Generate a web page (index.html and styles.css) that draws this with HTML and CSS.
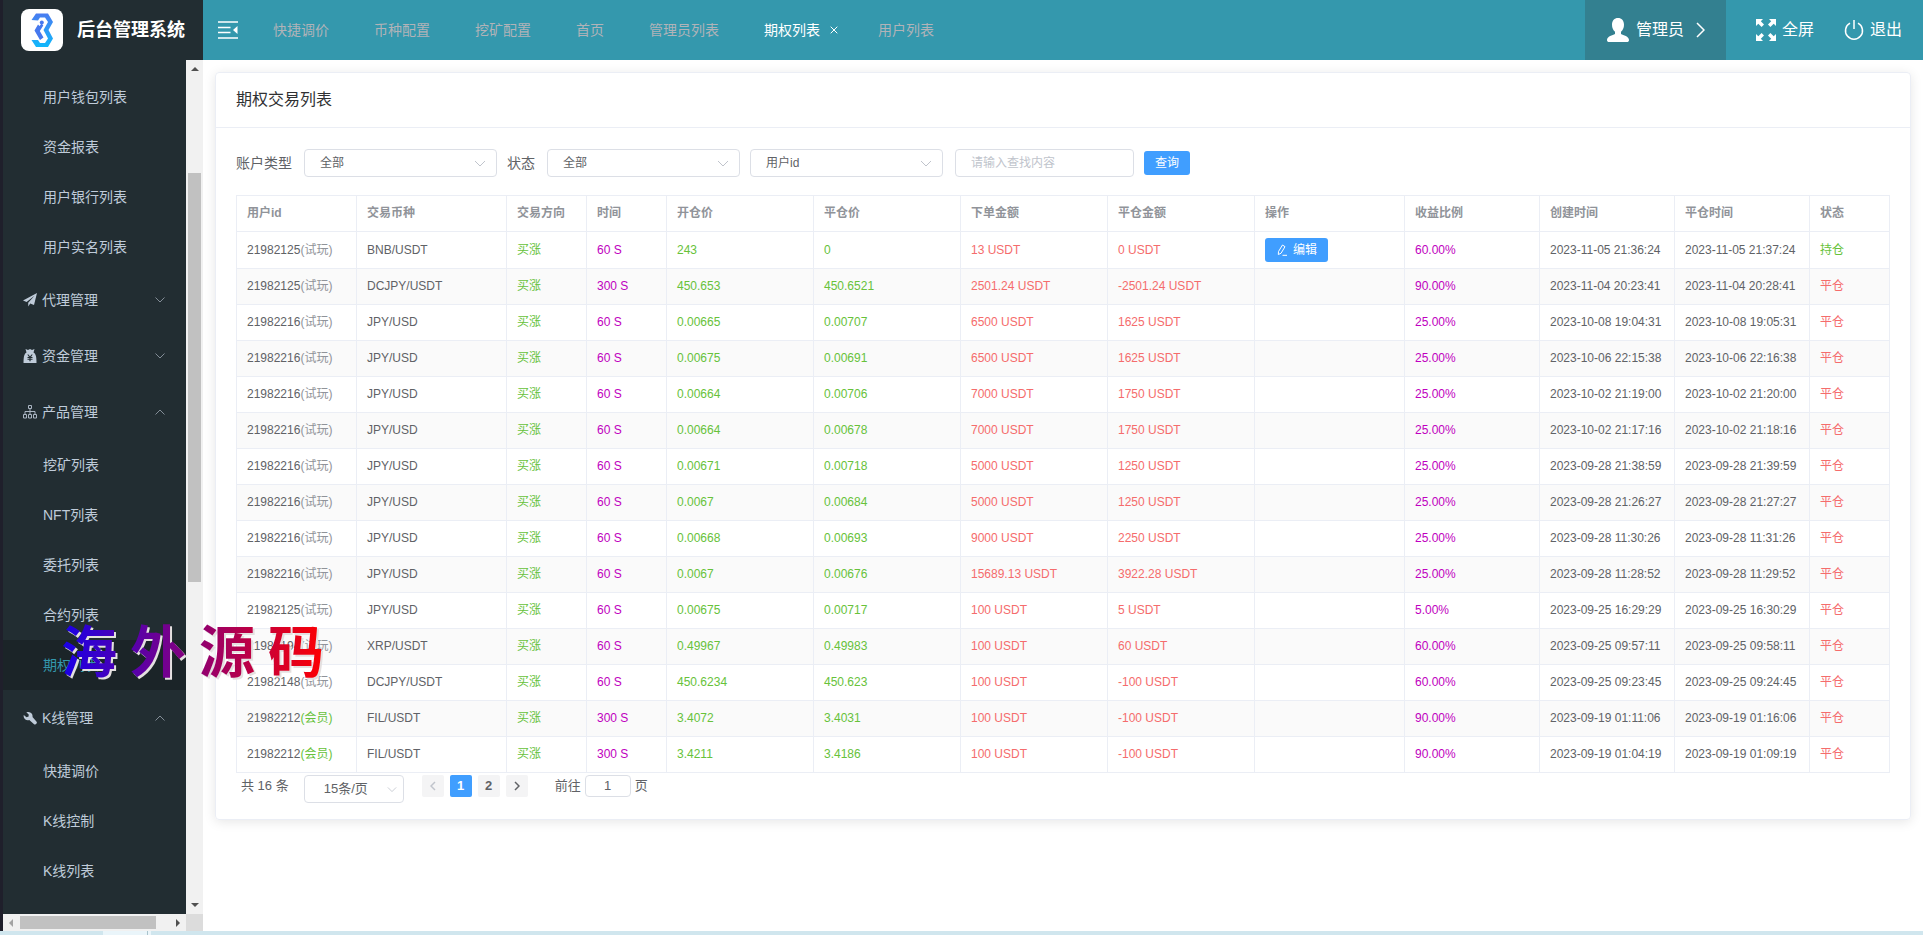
FILE: index.html
```html
<!DOCTYPE html>
<html lang="zh-CN">
<head>
<meta charset="utf-8">
<title>后台管理系统</title>
<link rel="stylesheet" href="styles.css">
</head>
<body>
<div class="shell">
  <aside class="sidebar">
    <div class="brand">
      <svg class="brand-logo" viewBox="0 0 42 42" aria-hidden="true">
        <defs><linearGradient id="lg" x1="0" y1="0" x2="0" y2="1"><stop offset="0" stop-color="#4a7cf0"/><stop offset="1" stop-color="#10b8fb"/></linearGradient></defs>
        <rect width="42" height="42" rx="8" fill="#fff"/>
        <path d="M10.500 11 L15 4.500 H27 L32 13 L27.500 21 L32 29.500 L27 38 H15 L10.500 31 H17 L19 34 H24 L27 29.500 L22.500 21 L27 13 L24 8.500 H19 L17 11.500 Z" fill="url(#lg)"/>
        <path d="M17 15.500 L13.500 21.500 L19 31 L22.500 28.500 L18.800 22 L22.300 16.500 L20.500 14.500 L18.500 17 Z" fill="#4678ee"/>
        <circle cx="20.800" cy="13.500" r="2" fill="#4678ee"/>
      </svg>
      <span class="brand-name">后台管理系统</span>
    </div>
    <div class="side-body">
      <nav class="menu">
        <a class="item" href="#">用户钱包列表</a>
        <a class="item" href="#">资金报表</a>
        <a class="item" href="#">用户银行列表</a>
        <a class="item" href="#">用户实名列表</a>
        <button class="group" type="button"><svg class="gi" viewBox="0 0 14 14"><path d="M14 0 L0 7.600 L3.600 9 L11.500 2.800 L5.200 9.700 L5.300 13.500 L7.200 10.600 L11 12 Z"/></svg><span>代理管理</span><svg class="arr" viewBox="0 0 10 6"><path d="M.5.5 5 5 9.500.5"/></svg></button>
        <button class="group" type="button"><svg class="gi" viewBox="0 0 14 14"><path fill-rule="evenodd" d="M2.500 0 L5 1 L7 0 L9 1 L11.500 0 L10.500 3.500 C12.500 4.500 13.500 7 13.500 14 H.5 C.5 7 1.500 4.500 3.500 3.500 Z M4.300 5.500 L6 8 H4.500 V9 H6.400 V9.800 H4.500 V10.800 H6.400 V12.300 H7.600 V10.800 H9.500 V9.800 H7.600 V9 H9.500 V8 H8 L9.700 5.500 H8.500 L7 7.600 L5.500 5.500 Z"/></svg><span>资金管理</span><svg class="arr" viewBox="0 0 10 6"><path d="M.5.5 5 5 9.500.5"/></svg></button>
        <button class="group" type="button"><svg class="gi line" viewBox="0 0 14 14"><path d="M5.500.5h3v3h-3z M7 3.500v3 M2 9.500v-3h10v3 M7 6.500v3 M.5 9.500h3v3.500h-3z M5.500 9.500h3v3.500h-3z M10.500 9.500h3v3.500h-3z"/></svg><span>产品管理</span><svg class="arr" viewBox="0 0 10 6"><path d="M.5 5.500 5 1 9.500 5.500"/></svg></button>
        <a class="item" href="#">挖矿列表</a>
        <a class="item" href="#">NFT列表</a>
        <a class="item" href="#">委托列表</a>
        <a class="item" href="#">合约列表</a>
        <a class="item active" href="#">期权列表</a>
        <button class="group" type="button"><svg class="gi" viewBox="0 0 14 14"><path d="M5.500 1 A4.200 4.200 0 0 1 9.500 6 L13.200 10.300 A1.700 1.700 0 0 1 10.800 13 L6.300 9 A4.200 4.200 0 0 1 .8 4 L3.500 6.200 L5.600 5.600 L5.700 3.500 L3.300 1.200 A4 4 0 0 1 5.500 1 Z"/></svg><span>K线管理</span><svg class="arr" viewBox="0 0 10 6"><path d="M.5 5.500 5 1 9.500 5.500"/></svg></button>
        <a class="item" href="#">快捷调价</a>
        <a class="item" href="#">K线控制</a>
        <a class="item" href="#">K线列表</a>
      </nav>
      <div class="vbar"><i class="tri up"></i><div class="vtrack"><div class="vthumb"></div></div><i class="tri down"></i></div>
      <div class="hbar"><i class="tri left"></i><div class="hthumb"></div><i class="tri right"></i></div>
      <div class="corner"></div>
    </div>
  </aside>

  <div class="main">
    <header class="topbar">
      <button class="fold" type="button" aria-label="收起菜单"><svg viewBox="0 0 20 18"><path d="M0 1h20M0 6.500h12.500M0 11.500h12.500M0 17h20" stroke="#fff" stroke-width="1.600" fill="none"/><path d="M19.500 5v8L15 9z" fill="#fff"/></svg></button>
      <nav class="tabs">
        <a href="#">快捷调价</a><a href="#">币种配置</a><a href="#">挖矿配置</a><a href="#">首页</a><a href="#">管理员列表</a><a href="#" class="on">期权列表<svg class="x" viewBox="0 0 8 8"><path d="M.7.700l6.600 6.600M7.300.700L.7 7.300"/></svg></a><a href="#">用户列表</a>
      </nav>
      <button class="user" type="button"><svg class="head" viewBox="0 0 24 26"><path fill="#fff" d="M12 1c3.600 0 6 2.700 6 6.700 0 2.900-1.200 5.700-3 7.100v2.100c2.300 1.200 8 2.200 8 6 0 1.400-.8 2.100-2.300 2.100H3.300C1.800 25 1 24.300 1 22.900c0-3.800 5.700-4.800 8-6v-2.100c-1.800-1.400-3-4.200-3-7.100 0-4 2.400-6.700 6-6.700z"/></svg><span>管理员</span><svg class="chev" viewBox="0 0 9 16"><path d="M1 1l7 7-7 7"/></svg></button>
      <div class="actions">
        <button type="button"><svg class="full" viewBox="0 0 20 22"><path fill="#fff" d="M0 0h7L4.800 2.200 8 5.600 5.600 8 2.300 4.700 0 7zM20 0v7l-2.300-2.300L14.400 8 12 5.600l3.200-3.400L13 0zM0 22v-7l2.300 2.300L5.600 14 8 16.400l-3.200 3.400L7 22zM20 22h-7l2.200-2.200-3.200-3.400 2.400-2.400 3.300 3.300L20 15z"/></svg>全屏</button>
        <button type="button"><svg class="power" viewBox="0 0 20 20"><path d="M6 3.200a8.500 8.500 0 1 0 8 0M10 0v9"/></svg>退出</button>
      </div>
    </header>

    <main class="content">
      <section class="card">
        <h1 class="card-head">期权交易列表</h1>
        <div class="card-body">
          <form class="filters">
            <label for="acct">账户类型</label>
            <span class="sel"><select id="acct"><option>全部</option></select><svg viewBox="0 0 12 7"><path d="M1 1l5 5 5-5"/></svg></span>
            <label for="state">状态</label>
            <span class="sel"><select id="state"><option>全部</option></select><svg viewBox="0 0 12 7"><path d="M1 1l5 5 5-5"/></svg></span>
            <span class="sel"><select aria-label="查找字段"><option>用户id</option></select><svg viewBox="0 0 12 7"><path d="M1 1l5 5 5-5"/></svg></span>
            <input class="search" type="text" placeholder="请输入查找内容" aria-label="查找内容">
            <button class="btn" type="button">查询</button>
          </form>
          <table>
            <colgroup><col class="w120"><col class="w150"><col class="w80"><col class="w80"><col><col><col><col><col class="w150"><col class="w135"><col class="w135"><col class="w135"><col class="w80"></colgroup>
            <thead><tr><th>用户id</th><th>交易币种</th><th>交易方向</th><th>时间</th><th>开仓价</th><th>平仓价</th><th>下单金额</th><th>平仓金额</th><th>操作</th><th>收益比例</th><th>创建时间</th><th>平仓时间</th><th>状态</th></tr></thead>
            <tbody id="rows"></tbody>
          </table>
          <div class="pager">
            <span class="total">共 16 条</span>
            <span class="sel size"><select aria-label="每页条数"><option>15条/页</option></select><svg viewBox="0 0 12 7"><path d="M1 1l5 5 5-5"/></svg></span>
            <div class="pages">
              <button type="button" disabled aria-label="上一页"><svg viewBox="0 0 6 10"><path d="M5 1L1 5l4 4"/></svg></button>
              <button type="button" class="cur">1</button>
              <button type="button">2</button>
              <button type="button" aria-label="下一页"><svg viewBox="0 0 6 10"><path d="M1 1l4 4-4 4"/></svg></button>
            </div>
            <label class="jump">前往<input type="text" value="1">页</label>
          </div>
        </div>
      </section>
    </main>
  </div>
  <div class="watermark"><span>海</span><span>外</span><span>源</span><span>码</span></div>
</div>
<div class="status"></div>
<script src="rows.js"></script>
</body>
</html>
```
FILE: styles.css
```css
* { box-sizing: border-box; }
body {
  margin: 0;
  height: 100vh;
  display: flex;
  flex-direction: column;
  overflow: hidden;
  background: #fff;
  color: #606266;
  font: 14px/20px "Liberation Sans", "Noto Sans CJK SC", sans-serif;
}
button, input, select { font: inherit; color: inherit; }
button { border: 0; padding: 0; background: none; cursor: pointer; }
a { text-decoration: none; color: inherit; }
svg { flex: none; fill: none; }

.shell { position: relative; flex: 1; min-height: 0; display: flex; }
.status { height: 4px; background: linear-gradient(90deg, #d0e6ee 103px, #eaf5fa 103px 147px, #a9c3cc 147px 148px, #eaf5fa 148px 151px, #d0e6ee 151px); }

.sidebar {
  width: 203px;
  flex: none;
  display: flex;
  flex-direction: column;
  border-left: 3px solid #1f1f2b;
  background: #222d32;
  color: #bfcbd9;
}
.brand { height: 60px; flex: none; display: flex; align-items: center; gap: 14px; padding-left: 18px; }
.brand-logo { width: 42px; height: 42px; }
.brand-name { color: #fff; font-size: 18px; font-weight: bold; white-space: nowrap; }
.side-body { flex: 1; min-height: 0; display: grid; grid-template: minmax(0, 1fr) 17px / minmax(0, 1fr) 17px; }
.menu { padding-top: 12px; overflow: hidden; display: flex; flex-direction: column; }
.item { height: 50px; flex: none; line-height: 50px; padding-left: 40px; }
.item.active { background: #1b2428; color: #3498ad; }
.group { height: 56px; flex: none; display: flex; align-items: center; gap: 5px; padding: 0 21px 0 20px; text-align: left; }
.group span { flex: 1; }
.gi { width: 14px; height: 14px; fill: #bfcbd9; }
.gi.line { fill: none; stroke: #aab5c2; }
.arr { width: 10px; height: 6px; stroke: #838d97; }
.vbar { background: #f1f1f1; display: flex; flex-direction: column; align-items: center; justify-content: space-between; padding: 7px 2px; }
.vtrack { flex: 1; align-self: stretch; padding: 102px 0 0; }
.vthumb { height: 56%; min-height: 20px; background: #c1c1c1; }
.hbar { background: #f1f1f1; display: flex; align-items: center; justify-content: space-between; padding: 2px 6px; }
.hthumb { flex: 1; height: 13px; margin: 0 20px 0 7px; background: #c1c1c1; }
.corner { background: #dcdcdc; }
.tri { border: 4px solid transparent; }
.tri.up { border-top: 0; border-bottom-color: #505050; }
.tri.down { border-bottom: 0; border-top-color: #505050; }
.tri.left { border-left: 0; border-right-color: #a3a3a3; }
.tri.right { border-right: 0; border-left-color: #505050; }

.main { flex: 1; min-width: 0; }
.topbar { height: 60px; display: flex; align-items: stretch; background: #3498ad; color: #fff; }
.fold { width: 50px; display: flex; align-items: center; justify-content: center; }
.fold svg { width: 20px; height: 18px; }
.tabs { flex: 1; display: flex; align-items: center; gap: 45px; padding-left: 20px; color: #b1b3b8; }
.tabs .on { color: #fff; display: flex; align-items: center; gap: 10px; margin-right: -5px; }
.x { width: 8px; height: 8px; stroke: #fff; }
.user { display: flex; align-items: center; background: #338090; padding: 0 21px; font-size: 16px; }
.head { width: 24px; height: 26px; margin-right: 6px; }
.chev { width: 9px; height: 16px; stroke: #fff; stroke-width: 1.500; margin-left: 12px; }
.actions { display: flex; gap: 30px; padding: 0 21px 0 30px; font-size: 16px; }
.actions button { display: flex; align-items: center; gap: 6px; }
.full { width: 20px; height: 22px; }
.power { width: 20px; height: 20px; stroke: #fff; stroke-width: 1.500; }

.content { padding: 12px; }
.card { border: 1px solid #ebeef5; border-radius: 4px; box-shadow: 0 2px 12px rgba(0, 0, 0, .1); }
.card-head { margin: 0; padding: 17px 20px; font-size: 16px; font-weight: normal; line-height: 20px; color: #303133; border-bottom: 1px solid #ebeef5; }
.card-body { padding: 20px 20px 16px; }

.filters { display: flex; align-items: center; height: 28px; margin: 1px 0 18px; }
.sel { position: relative; width: 193px; height: 28px; display: block; margin: 0 10px 0 12px; }
.sel + .sel { margin: 0 12px 0 0; }
.sel select, .search {
  width: 100%;
  height: 28px;
  appearance: none;
  background: #fff;
  border: 1px solid #dcdfe6;
  border-radius: 4px;
  padding: 0 15px;
  font-size: 12px;
  outline: 0;
}
.sel svg { position: absolute; right: 11px; top: 11px; width: 12px; height: 7px; stroke: #c0c4cc; pointer-events: none; }
.search { width: 179px; }
.search::placeholder { color: #c0c4cc; }
.btn { height: 24px; padding: 0 11px; border-radius: 3px; background: #409eff; color: #fff; font-size: 12px; line-height: 24px; }
.filters .btn { margin-left: 10px; }
td .btn { display: flex; align-items: center; gap: 5px; }
.btn svg { width: 12px; height: 12px; stroke: #fff; }

table { width: 100%; table-layout: fixed; border-collapse: collapse; font-size: 12px; line-height: 23px; }
th, td { height: 36px; padding: 0 10px; border: 1px solid #ebeef5; text-align: left; white-space: nowrap; }
th { color: #909399; font-weight: bold; }
tbody tr:first-child td { height: 37px; }
tbody tr:nth-child(even) { background: #fafafa; }
.w80 { width: 80px; }
.w120 { width: 120px; }
.w135 { width: 135px; }
.w150 { width: 150px; }
.green { color: #67c23a; }
.red { color: #f56c6c; }
.purple { color: #c000c0; }
.grey { color: #909399; }

.pager { display: flex; align-items: flex-start; padding: 2px 5px 0; font-size: 13px; }
.total { line-height: 22px; }
.sel.size { width: 100px; margin: 0 18px 0 15px; }
.size select { font-size: 13px; padding-left: 19px; }
.size svg { right: 7px; width: 10px; }
.pages { display: flex; gap: 6px; }
.pages button { width: 22px; height: 22px; border-radius: 2px; background: #f4f4f5; font-weight: bold; display: flex; align-items: center; justify-content: center; }
.pages svg { width: 6px; height: 10px; stroke: #606266; stroke-width: 1.500; }
.pages button:disabled svg { stroke: #c0c4cc; }
.pages .cur { background: #409eff; color: #fff; }
.jump { display: flex; gap: 4px; margin-left: 27px; line-height: 22px; }
.jump input { width: 46px; height: 22px; border: 1px solid #dcdfe6; border-radius: 4px; text-align: center; padding: 0; }

.watermark {
  position: absolute;
  left: 61px;
  top: 615px;
  display: flex;
  gap: 13px;
  font: bold 56px/66px "Noto Sans CJK SC", sans-serif;
  color: transparent;
  background: linear-gradient(90deg, #1800e8, #8a0078 50%, #ff0000);
  background-clip: text;
  -webkit-background-clip: text;
  filter: drop-shadow(2px 2px 0 #e4e0e0);
  pointer-events: none;
}
```
FILE: rows.js
```js
const rows = [
  ["21982125", "试玩", "BNB/USDT", "60", "243", "0", "13", "0", "60.00", "2023-11-05 21:36:24", "2023-11-05 21:37:24"],
  ["21982125", "试玩", "DCJPY/USDT", "300", "450.653", "450.6521", "2501.24", "-2501.24", "90.00", "2023-11-04 20:23:41", "2023-11-04 20:28:41"],
  ["21982216", "试玩", "JPY/USD", "60", "0.00665", "0.00707", "6500", "1625", "25.00", "2023-10-08 19:04:31", "2023-10-08 19:05:31"],
  ["21982216", "试玩", "JPY/USD", "60", "0.00675", "0.00691", "6500", "1625", "25.00", "2023-10-06 22:15:38", "2023-10-06 22:16:38"],
  ["21982216", "试玩", "JPY/USD", "60", "0.00664", "0.00706", "7000", "1750", "25.00", "2023-10-02 21:19:00", "2023-10-02 21:20:00"],
  ["21982216", "试玩", "JPY/USD", "60", "0.00664", "0.00678", "7000", "1750", "25.00", "2023-10-02 21:17:16", "2023-10-02 21:18:16"],
  ["21982216", "试玩", "JPY/USD", "60", "0.00671", "0.00718", "5000", "1250", "25.00", "2023-09-28 21:38:59", "2023-09-28 21:39:59"],
  ["21982216", "试玩", "JPY/USD", "60", "0.0067", "0.00684", "5000", "1250", "25.00", "2023-09-28 21:26:27", "2023-09-28 21:27:27"],
  ["21982216", "试玩", "JPY/USD", "60", "0.00668", "0.00693", "9000", "2250", "25.00", "2023-09-28 11:30:26", "2023-09-28 11:31:26"],
  ["21982216", "试玩", "JPY/USD", "60", "0.0067", "0.00676", "15689.13", "3922.28", "25.00", "2023-09-28 11:28:52", "2023-09-28 11:29:52"],
  ["21982125", "试玩", "JPY/USD", "60", "0.00675", "0.00717", "100", "5", "5.00", "2023-09-25 16:29:29", "2023-09-25 16:30:29"],
  ["21982194", "试玩", "XRP/USDT", "60", "0.49967", "0.49983", "100", "60", "60.00", "2023-09-25 09:57:11", "2023-09-25 09:58:11"],
  ["21982148", "试玩", "DCJPY/USDT", "60", "450.6234", "450.623", "100", "-100", "60.00", "2023-09-25 09:23:45", "2023-09-25 09:24:45"],
  ["21982212", "会员", "FIL/USDT", "300", "3.4072", "3.4031", "100", "-100", "90.00", "2023-09-19 01:11:06", "2023-09-19 01:16:06"],
  ["21982212", "会员", "FIL/USDT", "300", "3.4211", "3.4186", "100", "-100", "90.00", "2023-09-19 01:04:19", "2023-09-19 01:09:19"]
];
const edit = '<button class="btn" type="button"><svg viewBox="0 0 12 12"><path d="M2.500 7.500 6.500 1l2.500 1.700L5 9.300 2.300 10.500zM6.500 11.300H11"/></svg>编辑</button>';
document.getElementById("rows").innerHTML = rows.map((r, i) => `<tr>
<td>${r[0]}<span class="${r[1] === "会员" ? "green" : "grey"}">(${r[1]})</span></td>
<td>${r[2]}</td><td class="green">买涨</td><td class="purple">${r[3]} S</td>
<td class="green">${r[4]}</td><td class="green">${r[5]}</td>
<td class="red">${r[6]} USDT</td><td class="red">${r[7]} USDT</td>
<td>${i === 0 ? edit : ""}</td><td class="purple">${r[8]}%</td>
<td>${r[9]}</td><td>${r[10]}</td>
<td class="${i === 0 ? "green" : "red"}">${i === 0 ? "持仓" : "平仓"}</td></tr>`).join("");
```
